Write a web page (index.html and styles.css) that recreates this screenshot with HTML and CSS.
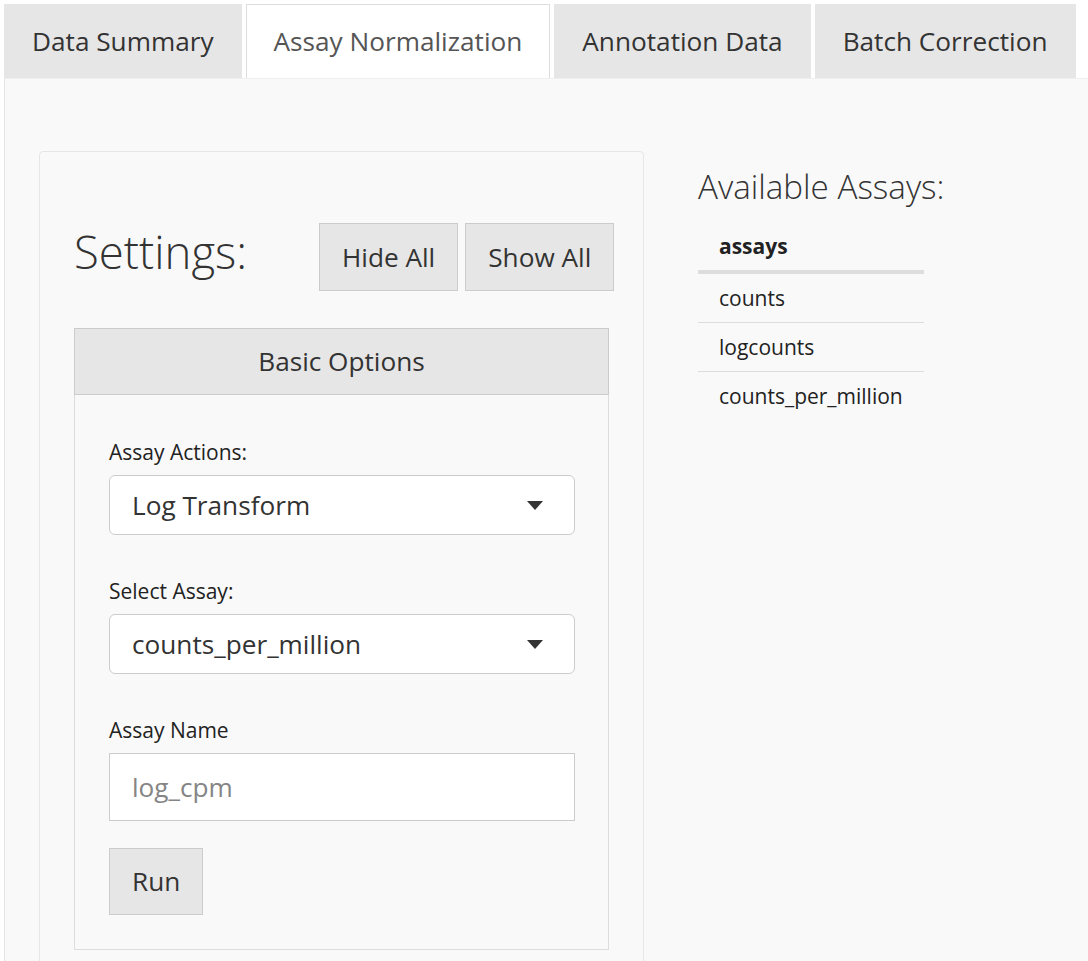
FILE: index.html
```html
<!DOCTYPE html>
<html>
<head>
<meta charset="utf-8">
<link rel="stylesheet" href="styles.css">
</head>
<body>
<div class="tabs">
  <div class="tab">Data Summary</div>
  <div class="tab active">Assay Normalization</div>
  <div class="tab">Annotation Data</div>
  <div class="tab">Batch Correction</div>
</div>
<div class="content">
  <div class="main">
    <div class="well">
      <div class="head-row">
        <h3 class="settings">Settings:</h3>
        <div class="btns">
          <button class="btn">Hide All</button>
          <button class="btn">Show All</button>
        </div>
      </div>
      <div class="collapse-box">
        <div class="collapse-head">Basic Options</div>
        <div class="collapse-body">
          <div class="form-group">
            <div class="label">Assay Actions:</div>
            <div class="select"><span>Log Transform</span><span class="caret"></span></div>
          </div>
          <div class="form-group">
            <div class="label">Select Assay:</div>
            <div class="select"><span>counts_per_million</span><span class="caret"></span></div>
          </div>
          <div class="form-group last">
            <div class="label">Assay Name</div>
            <div class="input"><span class="placeholder">log_cpm</span></div>
          </div>
          <button class="btn run">Run</button>
        </div>
      </div>
    </div>
    <div class="side">
      <h4 class="side-title">Available Assays:</h4>
      <table class="assay-table">
        <thead><tr><th>assays</th></tr></thead>
        <tbody>
          <tr><td>counts</td></tr>
          <tr><td>logcounts</td></tr>
          <tr><td>counts_per_million</td></tr>
        </tbody>
      </table>
    </div>
  </div>
</div>
</body>
</html>
```
FILE: styles.css
```css
html, body {
  margin: 0;
  padding: 0;
  background: #ffffff;
  font-family: "Open Sans", "Noto Sans", sans-serif;
  color: #333;
  overflow: hidden;
}

.tabs {
  display: flex;
  gap: 4px;
  padding: 4px 0 0 4px;
  height: 74px;
}

.tab {
  height: 74px;
  box-sizing: border-box;
  padding: 0 28px;
  font-size: 26.2px;
  line-height: 74px;
  background: #e6e6e6;
  color: #333;
  white-space: nowrap;
}

.tab.active {
  background: #ffffff;
  color: #555;
  border: 1px solid #dddddd;
  border-bottom: none;
  line-height: 73px;
  padding: 0 27px;
  position: relative;
  z-index: 1;
}

.content {
  margin-left: 4px;
  border-left: 1px solid #e4e4e4;
  border-top: 1px solid #efefef;
  background: #f9f9f9;
  padding: 72px 0 0 34px;
  min-height: 900px;
}

.main {
  display: flex;
  align-items: flex-start;
}

.well {
  width: 605px;
  box-sizing: border-box;
  border: 1px solid #e6e6e6;
  border-radius: 4px;
  background: #f9f9f9;
  padding: 35px 34px 35px 34px;
  flex: none;
}

.head-row {
  display: flex;
  align-items: flex-start;
  margin-top: 36px;
}

.settings {
  margin: 4px 0 0 0;
  width: 245px;
  flex: none;
  font-size: 45.5px;
  font-weight: 300;
  line-height: 48px;
  color: #333;
  white-space: nowrap;
}

.btns {
  display: flex;
  gap: 7px;
  flex: none;
}

.btn {
  font-family: "Open Sans", "Noto Sans", sans-serif;
  font-size: 26.2px;
  line-height: 37px;
  padding: 14.5px 22px;
  background: #e6e6e6;
  border: 1px solid #cccccc;
  border-radius: 0;
  color: #333;
  margin: 0;
  white-space: nowrap;
  flex: none;
}

.collapse-box {
  margin-top: 37px;
}

.collapse-head {
  height: 67px;
  box-sizing: border-box;
  background: #e6e6e6;
  border: 1px solid #cccccc;
  font-size: 26.2px;
  line-height: 65px;
  text-align: center;
  color: #333;
}

.collapse-body {
  border: 1px solid #dddddd;
  border-top: none;
  background: #f9f9f9;
  padding: 41px 33px 34px 34px;
}

.form-group {
  margin-bottom: 40px;
}

.form-group.last {
  margin-bottom: 27px;
}

.label {
  font-size: 21px;
  line-height: 28px;
  padding-top: 2px;
  margin-bottom: 9px;
  color: #222;
}

.select {
  height: 60px;
  box-sizing: border-box;
  border: 1px solid #cccccc;
  border-radius: 6px;
  background: #ffffff;
  display: flex;
  align-items: center;
  justify-content: space-between;
  padding: 0 31px 0 22px;
  font-size: 26.2px;
  color: #333;
}

.caret {
  width: 0;
  height: 0;
  border-left: 8.5px solid transparent;
  border-right: 8.5px solid transparent;
  border-top: 9px solid #333;
}

.input {
  height: 68px;
  box-sizing: border-box;
  border: 1px solid #cccccc;
  background: #ffffff;
  display: flex;
  align-items: center;
  padding: 0 22px;
  font-size: 26.2px;
}

.placeholder {
  color: #858585;
}

.btn.run {
  padding: 14px 22px;
}

.side {
  margin-left: 54px;
  margin-top: 18px;
}

.side-title {
  margin: 0 0 17px 0;
  font-size: 33.2px;
  font-weight: 300;
  line-height: 36px;
  color: #333;
  white-space: nowrap;
}

.assay-table {
  border-collapse: collapse;
  width: 225px;
  font-size: 21px;
}

.assay-table th {
  text-align: left;
  font-weight: 700;
  padding: 10px 21px;
  line-height: 28px;
  border-bottom: 4px solid #dddddd;
  color: #222;
}

.assay-table td {
  padding: 10px 21px;
  line-height: 28px;
  border-top: 1px solid #dddddd;
  color: #222;
  white-space: nowrap;
}

.assay-table tbody tr:first-child td {
  border-top: none;
}
```
